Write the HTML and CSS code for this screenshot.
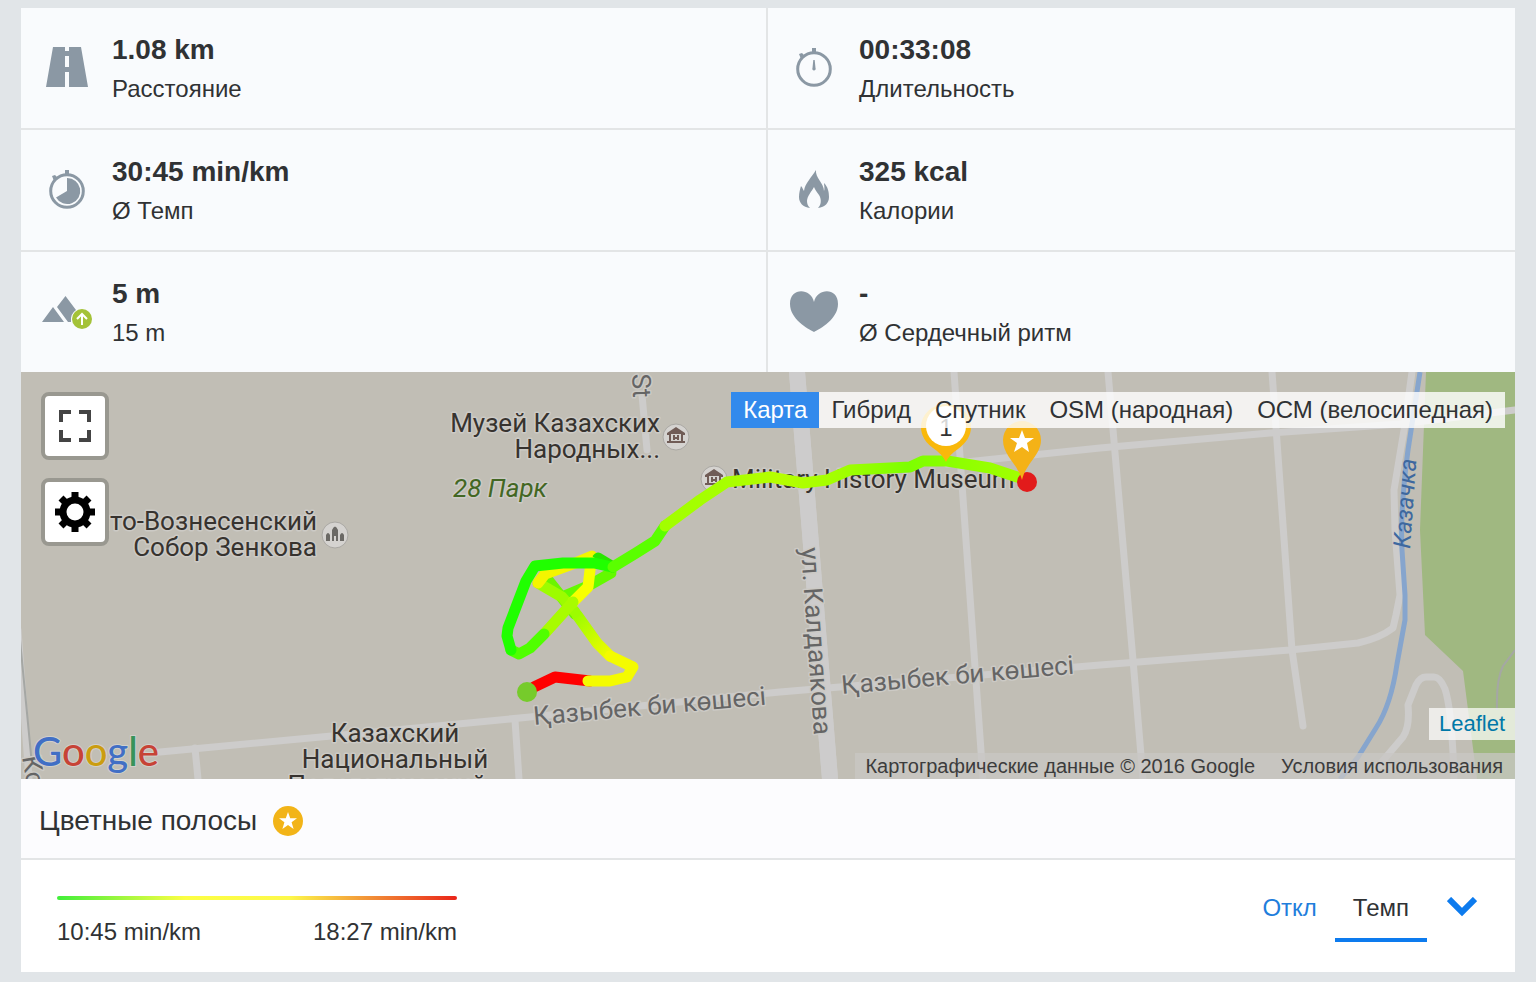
FILE: index.html
```html
<!DOCTYPE html>
<html lang="ru">
<head>
<meta charset="utf-8">
<meta name="viewport" content="width=device-width, initial-scale=1">
<title>Тренировка</title>
<link rel="stylesheet" href="styles.css">
</head>
<body>
<main class="workout">
  <section class="stats">
    <div class="stat">
      <svg class="stat-icon" viewBox="0 0 52 52"><path fill-rule="evenodd" d="M12 6H40L47 46H5ZM24 6V10H28V6ZM24 15V26H28V15ZM24 31V46H28V31Z"/></svg>
      <div><div class="value">1.08 km</div><div class="name">Расстояние</div></div>
    </div>
    <div class="stat">
      <svg class="stat-icon" viewBox="0 0 52 52"><circle cx="26" cy="28" r="16.300000" fill="none" stroke="currentColor" stroke-width="3"/><path d="M24 7H28V12H24ZM11 13L14 12L17 15L13 18ZM25.300000 19H26.700000L27.500000 27A1.700000 1.700000 0 1 1 24.500000 27Z"/></svg>
      <div><div class="value">00:33:08</div><div class="name">Длительность</div></div>
    </div>
    <div class="stat">
      <svg class="stat-icon" viewBox="0 0 52 52"><circle cx="26" cy="28" r="16.300000" fill="none" stroke="currentColor" stroke-width="3"/><path d="M24 7H28V12H24ZM11 13L14 12L17 15L13 18ZM26 28V15A13 13 0 1 1 15 34.500000Z"/></svg>
      <div><div class="value">30:45 min/km</div><div class="name">Ø Темп</div></div>
    </div>
    <div class="stat">
      <svg class="stat-icon" viewBox="0 0 52 52"><path d="M28 7C27 15 36 20 36 28C37 26 36 22 36 20C40 24 41 29 41 34C41 40 37 44 30 45C33 42 34 37 31 32C29 29 27 27 26 24C24 28 19 33 19 38C19 41 20 43 22 45C15 44 11 40 11 34C11 30 12 26 13 23C15 25 15 27 16 28C17 20 24 14 28 7Z"/></svg>
      <div><div class="value">325 kcal</div><div class="name">Калории</div></div>
    </div>
    <div class="stat">
      <svg class="stat-icon" viewBox="0 0 52 52"><path d="M1 37L12 22L23 37ZM24.500000 11L35 25Q29 29 30 37H27L16 22Z"/><circle cx="41" cy="34" r="10" fill="#a4c238"/><path d="M41 40V29M36 34L41 29L46 34" fill="none" stroke="#fff" stroke-width="2"/></svg>
      <div><div class="value">5 m</div><div class="name">15 m</div></div>
    </div>
    <div class="stat">
      <svg class="stat-icon" viewBox="0 0 52 52"><path d="M26 47C20 44 2 34 2 19C2 2 23 3 26 17C29 3 50 2 50 19C50 34 32 44 26 47Z"/></svg>
      <div><div class="value">-</div><div class="name">Ø Сердечный ритм</div></div>
    </div>
  </section>

  <section class="map">
    <svg class="map-canvas" viewBox="21 372 1494 407" preserveAspectRatio="xMidYMid slice" role="img" aria-label="Карта маршрута">
      <path class="park" d="M1426 372L1420 530L1425 635L1463 671L1477 779H1515V372Z"/>
      <g class="roads">
        <path d="M797 372L830 779" stroke-width="16"/>
        <path d="M954 372L983 779M1108 372L1133 660L1143 779M1272 372L1292 650L1303 726M642 395L647 450M195 748L198 779M515 720L519 779"/>
        <path d="M947 464L1100 448L1270 433L1400 424L1515 410M160 752L385 731L530 717L780 692L1100 665L1290 650L1358 643Q1380 638 1393 628L1396 615L1400 595L1395 530L1394 490L1404 430L1412 372"/>
        <path d="M1375 770L1403 737Q1410 727 1408 705L1416 685Q1420 677 1426 677H1434Q1440 677 1445 689Q1452 710 1454 779"/>
        <path d="M18 630L29 779"/>
      </g>
      <path class="avenue" d="M797 372L830 779"/>
      <path class="rail" d="M20 640L32 765M1515 650L1503 666Q1496 680 1497 710"/>
      <path class="river" d="M1420 372L1408 450Q1400 510 1402 550L1405 595V620L1397 664Q1391 705 1376 728L1358 757L1340 779"/>

      <g class="poi-mark"><circle cx="335" cy="535" r="13"/><circle cx="676" cy="437" r="13"/><circle cx="714" cy="479" r="13"/></g>
      <path fill="#6b6965" d="M326 541V535Q328 531 330 535V541ZM332 541V530Q335 523 338 530V541H336V536H334V541ZM340 541V535Q342 531 344 535V541Z"/>
      <g id="museum"><path fill="#705c56" fill-rule="evenodd" d="M667 433L676 427L685 433V435H683V441H685V443H667V441H669V435H667ZM671 434V441H681V434Z"/><path fill="#705c56" d="M673 435H675V437H677V435H679V440H677V439H675V440H673Z"/></g>
      <use href="#museum" x="38" y="42"/>

      <g class="places">
        <text x="317" y="530" text-anchor="end">Свято-Вознесенский</text>
        <text x="317" y="556" text-anchor="end">Собор Зенкова</text>
        <text x="660" y="432" text-anchor="end">Музей Казахских</text>
        <text x="660" y="458" text-anchor="end">Народных...</text>
        <text x="395" y="742" text-anchor="middle">Казахский</text>
        <text x="395" y="768" text-anchor="middle">Национальный</text>
        <text x="387" y="794" text-anchor="middle">Педагогический</text>
        <text x="732" y="488">Military History Museum</text>
      </g>
      <text class="park-name" x="453" y="497">28 Парк</text>
      <g class="streets">
        <text transform="translate(534 725) rotate(-5)">Қазыбек би көшесі</text>
        <text transform="translate(842 694) rotate(-5)">Қазыбек би көшесі</text>
        <text transform="translate(801 548) rotate(86)">ул. Калдаякова</text>
        <text transform="translate(632 374) rotate(87)">St</text>
        <text transform="translate(22 757) rotate(80)">Койгельды</text>
      </g>
      <text class="river-name" transform="translate(1410 549) rotate(-86)">Казачка</text>

      <defs>
        <linearGradient id="fade" gradientUnits="userSpaceOnUse" x1="577" y1="615" x2="612" y2="656"><stop stop-color="#9dfc00"/><stop offset="1" stop-color="#f4fb00"/></linearGradient>
        <linearGradient id="east" gradientUnits="userSpaceOnUse" x1="665" y1="0" x2="1022" y2="0"><stop stop-color="#a2ff00"/><stop offset=".15" stop-color="#a6ff00"/><stop offset=".32" stop-color="#b6ff00"/><stop offset=".5" stop-color="#a0ff00"/><stop offset=".68" stop-color="#7dff00"/><stop offset="1" stop-color="#a2ff00"/></linearGradient>
      </defs>
      <g class="track">
        <path d="M534 687L555 677L590 681" stroke="#f00"/>
        <path d="M548 580L575 614" stroke="#6bf500"/>
        <path d="M577 615L597 643L610 656" stroke="url(#fade)"/>
        <path d="M588 681H610L627 677L633 667L610 656" stroke="#f4fb00"/>
        <path d="M562 597L588 586L611 573" stroke="#63fa00"/>
        <path d="M538 583L562 597L575 612" stroke="#9dfc00"/>
        <path d="M538 583L545 574L575 563L592 556" stroke="#f4f500"/>
        <path d="M598 558L613 567" stroke="#29e600"/>
        <path d="M591 562L588 587L573 602" stroke="#f8ff00"/>
        <path d="M573 602L545 633" stroke="#a8fc00"/>
        <path d="M544 634L530 648L519 654L511 650" stroke="#50ff00"/>
        <path d="M511 650L507 636L508 628L526 581L535 566L563 563L594 563L612 567" stroke="#20ff00"/>
        <path d="M613 567L636 553L655 541L665 526" stroke="#5aff00"/>
        <path d="M665 526L700 500L727 482L770 477L803 483L827 480L850 470L910 467L923 461L947 461L990 468L1017 477" stroke="url(#east)"/>
      </g>
      <circle cx="527" cy="692" r="10" fill="#76cb2b"/>
      <circle cx="1027" cy="482" r="10" fill="#e21b1b"/>
      <path fill="#f9b80b" d="M946 462Q942 454 933 448C922 440 921 431 921 427A25 23 0 0 1 971 427C971 436 966 443 958 449Q949 455 946 462Z"/>
      <circle cx="946" cy="426" r="20" fill="#fff"/>
      <text class="milestone" x="946" y="436" text-anchor="middle">1</text>
      <path fill="#f4b217" d="M1022 480C1018 464 1003 456 1003 440A19 19 0 0 1 1041 440C1041 455 1026 463 1022 480Z"/>
      <path fill="#fff" d="M1022 430L1025 438H1034L1027 443L1029 452L1022 447L1014 452L1017 443L1010 438H1019Z"/>
      <text class="google" x="33" y="766"><tspan fill="#416fc5">G</tspan><tspan fill="#c74336">o</tspan><tspan fill="#cb9d10">o</tspan><tspan fill="#416fc5">g</tspan><tspan fill="#37935a">l</tspan><tspan fill="#c74336">e</tspan></text>
    </svg>
    <div class="map-buttons">
      <button class="map-button" type="button" aria-label="На весь экран"><svg viewBox="0 0 60 60"><path d="M16 26V16H26M34 16H44V26M44 34V44H34M26 44H16V34" fill="none" stroke="#444" stroke-width="4"/></svg></button>
      <button class="map-button" type="button" aria-label="Настройки"><svg viewBox="0 0 60 60"><circle cx="30" cy="30" r="12" fill="none" stroke="#000" stroke-width="7"/><path d="M30 10V18M30 42V50M10 30H18M42 30H50M16 16L21 21M39 39L44 44M44 16L39 21M21 39L16 44" fill="none" stroke="#000" stroke-width="7"/></svg></button>
    </div>
    <nav class="layers">
      <button class="layer active" type="button">Карта</button><button class="layer" type="button">Гибрид</button><button class="layer" type="button">Спутник</button><button class="layer" type="button">OSM (народная)</button><button class="layer" type="button">ОСМ (велосипедная)</button>
    </nav>
    <a class="leaflet" href="#">Leaflet</a>
    <div class="credits"><span>Картографические данные © 2016 Google</span><a href="#">Условия использования</a></div>
  </section>

  <header class="legend-head">
    <h2>Цветные полосы</h2>
    <svg class="premium" viewBox="0 0 30 30"><circle cx="15" cy="15" r="15" fill="#f2b418"/><path fill="#fff" d="M15 6L17.200000 12.300000H24L18.600000 16.300000L20.600000 23L15 19L9.400000 23L11.400000 16.300000L6 12.300000H12.800000Z"/></svg>
  </header>
  <section class="legend">
    <div class="scale">
      <div class="bar"></div>
      <div class="ends"><span>10:45 min/km</span><span>18:27 min/km</span></div>
    </div>
    <div class="modes">
      <button class="mode" type="button">Откл</button>
      <button class="mode selected" type="button">Темп</button>
      <button class="more" type="button" aria-label="Ещё"><svg viewBox="0 0 30 20"><path d="M2 2L15 15L28 2" fill="none" stroke="#0d7bee" stroke-width="6"/></svg></button>
    </div>
  </section>
</main>
</body>
</html>
```
FILE: styles.css
```css
* { box-sizing: border-box; }

body {
  margin: 0;
  padding: 8px 21px 10px;
  background: #e1e5e8;
  color: #303234;
  font-family: "Liberation Sans", Arial, sans-serif;
  font-size: 24px;
}

button {
  margin: 0;
  border: 0;
  padding: 0;
  background: none;
  color: inherit;
  font: inherit;
  cursor: pointer;
}

a { text-decoration: none; }

.stats {
  display: grid;
  grid-template-columns: 745fr 747fr;
  gap: 2px;
  background: #e3e5e6;
}

.stat {
  display: flex;
  align-items: flex-start;
  gap: 19px;
  padding: 24px 20px 22px;
  background: #f9fbfd;
}

.stat-icon {
  width: 52px;
  height: 52px;
  margin-top: 9px;
  fill: currentColor;
  color: #8b98a4;
}

.value {
  height: 38px;
  font-size: 28px;
  font-weight: bold;
  line-height: 36px;
}

.name {
  height: 36px;
  line-height: 38px;
}

.map {
  position: relative;
  height: 407px;
  overflow: hidden;
  background: #c1beb5;
}

.map-canvas {
  display: block;
  width: 100%;
  height: 100%;
  font-family: Roboto, sans-serif;
  font-size: 26px;
}

.park { fill: #a0b881; }

.roads {
  fill: none;
  stroke: #cdcccb;
  stroke-width: 7px;
  stroke-linejoin: round;
  stroke-linecap: round;
}

.avenue { stroke: #cdcccc; stroke-width: 16px; }

.rail {
  fill: none;
  stroke: #a5a7a4;
  stroke-width: 2px;
}

.river {
  fill: none;
  stroke: #86a5cd;
  stroke-width: 5px;
}

.poi-mark { fill: #d5d3d0; stroke: #aaa8a3; stroke-width: 1px; }

.places text,
.streets text,
.park-name {
  paint-order: stroke;
  stroke: #cccac5;
  stroke-width: 3px;
  stroke-linejoin: round;
}

.places { fill: #37332f; }
.streets { fill: #656565; }
.park-name { fill: #436723; font-style: italic; }
.river-name { fill: #3d689f; font-size: 24px; font-style: italic; }

.track {
  fill: none;
  stroke-width: 11px;
  stroke-linecap: round;
  stroke-linejoin: round;
}

.milestone { fill: #333; font-family: "Liberation Sans", sans-serif; font-size: 24px; }

.google {
  font-family: Lato, sans-serif;
  font-size: 40px;
  font-weight: 500;
  paint-order: stroke;
  stroke: #d2d0cb;
  stroke-width: 2px;
}

.map-buttons {
  position: absolute;
  top: 20px;
  left: 20px;
  display: grid;
  gap: 18px;
}

.map-button {
  width: 68px;
  height: 68px;
  border: 4px solid #999890;
  border-radius: 8px;
  background: #fff;
}

.map-button svg { display: block; width: 60px; height: 60px; }

.layers {
  position: absolute;
  top: 20px;
  right: 10px;
  display: flex;
  background: rgba(255, 255, 255, 0.8);
}

.layer {
  padding: 0 12px;
  line-height: 36px;
  white-space: nowrap;
}

.layer.active { background: #328aec; color: #fff; }

.leaflet {
  position: absolute;
  right: 0;
  bottom: 39px;
  padding: 0 10px;
  background: rgba(255, 255, 255, 0.7);
  color: #0078a8;
  font-size: 22px;
  line-height: 32px;
}

.credits {
  position: absolute;
  right: 0;
  bottom: 0;
  display: flex;
  gap: 26px;
  padding: 0 12px 0 10px;
  background: rgba(200, 199, 196, 0.75);
  color: #3c3c3c;
  font-size: 20px;
  line-height: 26px;
}

.credits a { color: inherit; }

.legend-head {
  display: flex;
  align-items: center;
  gap: 16px;
  height: 81px;
  padding: 4px 18px 0;
  border-bottom: 2px solid #e3e5e6;
  background: #fcfcfe;
}

.legend-head h2 {
  margin: 0;
  font-size: 28px;
  font-weight: normal;
  line-height: 36px;
}

.premium { width: 30px; height: 30px; }

.legend {
  display: flex;
  justify-content: space-between;
  align-items: flex-start;
  padding: 18px 38px 22px 36px;
  background: #fff;
}

.scale { width: 400px; padding-top: 18px; }

.bar {
  height: 4px;
  border-radius: 2px;
  background: linear-gradient(90deg, #40ef3a, #fcff43 32%, #fdf94a 58%, #f18735 80%, #ea2419);
}

.ends {
  display: flex;
  justify-content: space-between;
  padding-top: 14px;
  line-height: 36px;
}

.modes { display: flex; }

.mode {
  height: 64px;
  padding: 0 18px;
  border-bottom: 4px solid transparent;
  color: #1f7edc;
}

.mode.selected { border-color: #0d7bee; color: #303234; }

.more { height: 58px; margin-left: 20px; }
.more svg { display: block; width: 30px; height: 20px; }
```
